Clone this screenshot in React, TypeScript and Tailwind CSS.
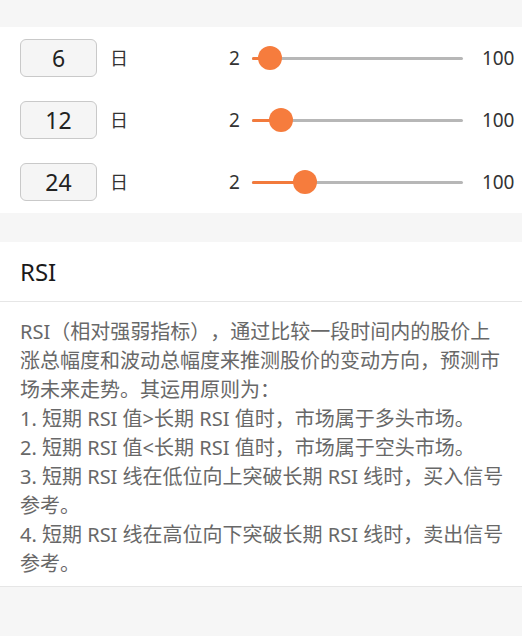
import React from "react";

type Period = { value: number; thumb: number };

const periods: Period[] = [
  { value: 6, thumb: 18 },
  { value: 12, thumb: 29 },
  { value: 24, thumb: 53 },
];

const descLines = [
  "RSI（相对强弱指标），通过比较一段时间内的股价上",
  "涨总幅度和波动总幅度来推测股价的变动方向，预测市",
  "场未来走势。其运用原则为：",
  "1. 短期 RSI 值>长期 RSI 值时，市场属于多头市场。",
  "2. 短期 RSI 值<长期 RSI 值时，市场属于空头市场。",
  "3. 短期 RSI 线在低位向上突破长期 RSI 线时，买入信号",
  "参考。",
  "4. 短期 RSI 线在高位向下突破长期 RSI 线时，卖出信号",
  "参考。",
];

function PeriodRow({ period }: { period: Period }) {
  return (
    <div className="flex h-[62px] items-center px-[20px]">
      <div className="flex w-[209px] shrink-0 items-center">
        <div className="flex h-[38px] w-[77px] shrink-0 items-center justify-center rounded-[6px] border border-[#c9c9c9] bg-[#f5f5f5] text-[23px] text-[#222]">
          {period.value}
        </div>
        <span className="ml-[13px] text-[18px] text-[#333]">日</span>
      </div>
      <span className="shrink-0 text-[19px] text-[#333]">2</span>
      <div className="relative ml-[12px] h-[3px] w-[211px] shrink-0 rounded-full bg-[#b7b7b7]">
        <div className="absolute left-0 top-0 h-[3px] rounded-full bg-[#f27a3c]" style={{ width: period.thumb }} />
        <div
          className="absolute top-1/2 h-[24px] w-[24px] -translate-x-1/2 -translate-y-1/2 rounded-full bg-[#f67c3d]"
          style={{ left: period.thumb }}
        />
      </div>
      <span className="ml-[19px] shrink-0 text-[19px] text-[#333]">100</span>
    </div>
  );
}

export default function App() {
  return (
    <div className="min-h-[636px] bg-[#f6f6f6] font-['Noto_Sans','Noto_Sans_CJK_SC',sans-serif]">
      <div className="h-[27px]" />
      <section className="bg-white">
        {periods.map((p) => (
          <PeriodRow key={p.value} period={p} />
        ))}
      </section>
      <div className="h-[29px]" />
      <section className="border-b border-[#e6e6e6] bg-white">
        <div className="flex h-[60px] items-center border-b border-[#e6e6e6] px-[20px] text-[24px] text-[#1a1a1a]">
          RSI
        </div>
        <div className="px-[20px] pb-[8px] pt-[15px] text-[20px] leading-[29px] text-[#686868] [text-spacing-trim:space-all]">
          {descLines.map((line, i) => (
            <div key={i} className="whitespace-nowrap">
              {line}
            </div>
          ))}
        </div>
      </section>
    </div>
  );
}
